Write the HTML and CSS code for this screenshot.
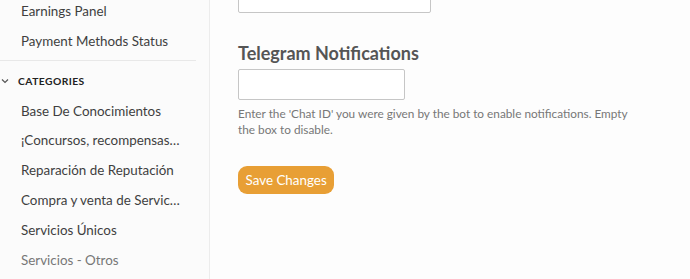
FILE: index.html
```html
<!DOCTYPE html>
<html>
<head>
<meta charset="utf-8">
<link rel="stylesheet" href="styles.css">
</head>
<body>
<div class="layout">
  <aside class="sidebar">
    <ul class="menu first">
      <li>Earnings Panel</li>
      <li>Payment Methods Status</li>
    </ul>
    <div class="sep"></div>
    <div class="section-head">
      <svg class="chev" width="8" height="6" viewBox="0 0 8 6"><path d="M1 1.5 L4 4.5 L7 1.5" fill="none" stroke="#555" stroke-width="1.2"/></svg>
      <span>CATEGORIES</span>
    </div>
    <ul class="menu">
      <li>Base De Conocimientos</li>
      <li>¡Concursos, recompensas…</li>
      <li>Reparación de Reputación</li>
      <li>Compra y venta de Servic…</li>
      <li>Servicios Únicos</li>
      <li class="faded">Servicios - Otros</li>
    </ul>
  </aside>
  <main class="content">
    <div class="input top-input"></div>
    <h3 class="title">Telegram Notifications</h3>
    <div class="input tg-input"></div>
    <p class="help">Enter the 'Chat ID' you were given by the bot to enable notifications. Empty the box to disable.</p>
    <button class="btn">Save Changes</button>
  </main>
</div>
</body>
</html>
```
FILE: styles.css
```css
html, body {
  margin: 0;
  padding: 0;
  background: #fcfcfc;
  font-family: Lato, "Liberation Sans", sans-serif;
  overflow: hidden;
}
.layout {
  display: flex;
  height: 279px;
}
.sidebar {
  width: 209px;
  flex: none;
  border-right: 1px solid #ececec;
  background: #fbfbfb;
}
.menu {
  list-style: none;
  margin: 0;
  padding: 0;
}
.menu.first {
  margin-top: -3px;
}
.menu li {
  height: 29.8px;
  line-height: 29.8px;
  padding-left: 21px;
  font-size: 13.4px;
  color: #3f3f3f;
  white-space: nowrap;
}
.menu li.faded {
  color: #777;
}
.sep {
  width: 196px;
  height: 1px;
  background: #e8e8e8;
  margin: 3px 0 5px 0;
}
.section-head {
  height: 31px;
  display: flex;
  align-items: center;
  padding-left: 1px;
  gap: 9px;
}
.section-head span {
  font-size: 10.3px;
  font-weight: 700;
  letter-spacing: 0.45px;
  color: #222;
}
.content {
  flex: 1;
  padding-left: 28px;
  background: #fdfdfd;
}
.input {
  border: 1px solid #c6c6c6;
  border-radius: 2px;
  background: #fff;
  box-sizing: border-box;
}
.top-input {
  width: 193px;
  height: 30px;
  margin-top: -17px;
}
.title {
  margin: 29px 0 0 0;
  font-size: 18px;
  font-weight: 700;
  color: #555;
  line-height: 22px;
}
.tg-input {
  width: 167px;
  height: 31px;
  margin-top: 5px;
}
.help {
  margin: 6px 0 0 0;
  width: 402px;
  font-size: 11.8px;
  line-height: 16px;
  color: #777;
}
.btn {
  margin-top: 28px;
  height: 28px;
  padding: 0 7.5px;
  border: none;
  border-radius: 9px;
  background: #e89f35;
  color: #fff;
  font-family: Lato, "Liberation Sans", sans-serif;
  font-size: 13.4px;
  line-height: 28px;
}
```
